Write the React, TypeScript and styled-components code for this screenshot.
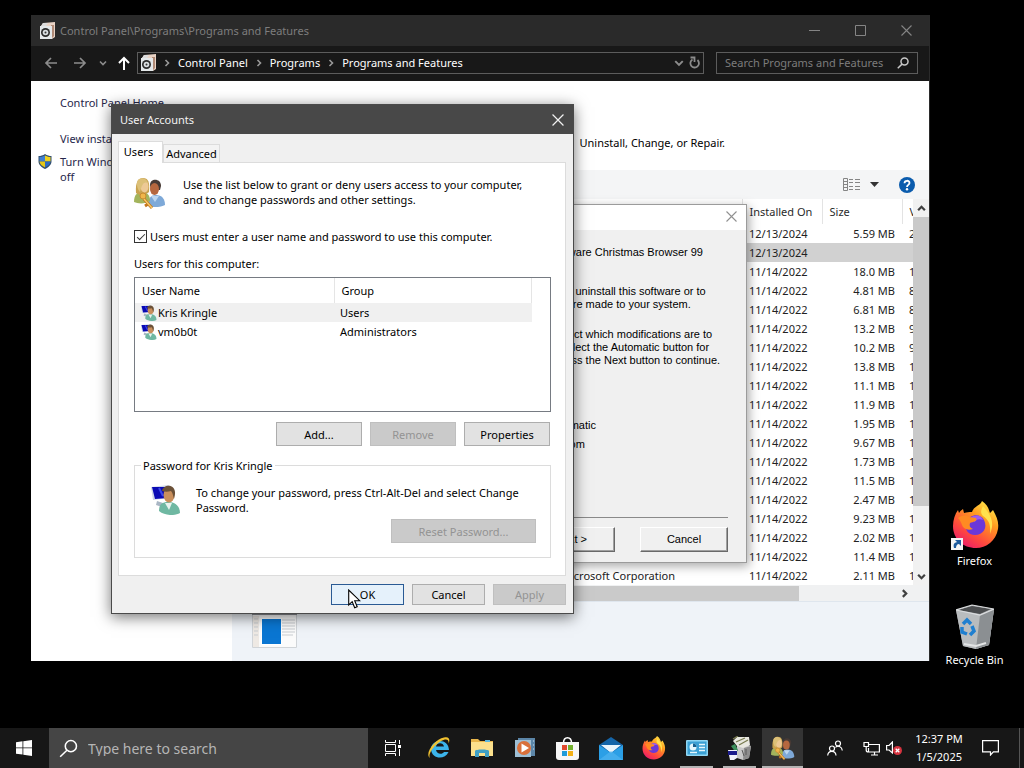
import React from "react";
import styled, { createGlobalStyle, css } from "styled-components";

const ui = `"Noto Sans", "Open Sans", "Liberation Sans", sans-serif`;

const Global = createGlobalStyle`
  *, *::before, *::after { box-sizing: border-box; }
  body { margin: 0; background: #000; font: 11px/15px ${ui}; color: #000; overflow: hidden; }
  button, input { font: inherit; color: inherit; }
  button { border: 0; padding: 0; background: none; }
  a { color: inherit; text-decoration: none; }
  svg { display: block; flex: none; }
`;

/* ---------- desktop ---------- */

const Desktop = styled.main`
  height: 100vh;
  display: flex;
  flex-direction: column;
  background: #000;
`;

const Workspace = styled.div`
  position: relative;
  flex: 1;
  min-height: 0;
`;

const Shortcuts = styled.nav`
  position: absolute;
  top: 500px;
  right: 12px;
  width: 75px;
  display: flex;
  flex-direction: column;
  gap: 36px;
`;

const Shortcut = styled.a`
  display: flex;
  flex-direction: column;
  align-items: center;
  gap: 2px;
  color: #fff;
  white-space: nowrap;
`;

/* ---------- explorer window ---------- */

const Explorer = styled.section`
  position: absolute;
  inset: 15px 94px 67px 31px;
  display: flex;
  flex-direction: column;
  background: #fff;
  border-right: 1px solid #2b2b2b;
`;

const ExplorerTitle = styled.header`
  display: flex;
  align-items: center;
  height: 31px;
  padding-left: 9px;
  background: #2a2a2a;
  color: #7d7d7d;
  flex: none;
`;

const TitleText = styled.h1`
  margin: 0 0 0 5px;
  flex: 1;
  font: inherit;
`;

const Caption = styled.button`
  width: 46px;
  height: 30px;
  display: grid;
  place-items: center;
  color: #858585;
`;

const NavBar = styled.div`
  display: flex;
  align-items: center;
  height: 35px;
  padding: 0 11px 2px;
  background: #181818;
  color: #fff;
  flex: none;
`;

const NavButton = styled.button<{ $w: number; $dim?: boolean }>`
  width: ${(p) => p.$w}px;
  height: 22px;
  display: grid;
  place-items: center;
  color: ${(p) => (p.$dim ? "#8c8c8c" : "#fff")};
`;

const UpButton = styled(NavButton)`
  padding-left: 4px;
`;

const Address = styled.div`
  flex: 1;
  display: flex;
  align-items: center;
  height: 22px;
  padding: 0 0 0 3px;
  border: 1px solid #5c5c5c;
`;

const Crumb = styled.a`
  white-space: nowrap;
`;

const CrumbArrow = styled.span`
  width: 22px;
  display: grid;
  place-items: center;
  color: #9a9a9a;
`;

const Spacer = styled.span`
  flex: 1;
`;

const SearchBox = styled.label`
  display: flex;
  align-items: center;
  width: 202px;
  height: 22px;
  margin-left: 12px;
  padding: 0 8px;
  border: 1px solid #5c5c5c;
  color: #c8c8c8;
`;

const SearchField = styled.input`
  flex: 1;
  min-width: 0;
  padding: 0;
  border: 0;
  outline: 0;
  background: none;
  &::placeholder { color: #7c7c7c; opacity: 1; }
`;

const ExplorerBody = styled.div`
  flex: 1;
  min-height: 0;
  display: flex;
`;

const Sidebar = styled.aside`
  width: 201px;
  flex: none;
  padding: 14px 8px 0 7px;
  color: #26264a;
`;

const SideLink = styled.a<{ $gap: number }>`
  display: flex;
  gap: 8px;
  margin-bottom: ${(p) => p.$gap}px;
`;

const SideIcon = styled.span`
  width: 14px;
  flex: none;
`;

const SideText = styled.span`
  max-width: 150px;
`;

const MainPane = styled.div`
  flex: 1;
  min-width: 0;
  display: flex;
  flex-direction: column;
`;

const Intro = styled.div`
  height: 89px;
  padding: 54px 204px 0 0;
  text-align: right;
  white-space: nowrap;
`;

const Toolbar = styled.div`
  height: 29px;
  flex: none;
  display: flex;
  align-items: center;
  justify-content: flex-end;
  gap: 10px;
  padding-right: 14px;
  background: #f4f5f6;
  color: #333;
`;

const ListArea = styled.div`
  flex: 1;
  min-height: 0;
  display: flex;
`;

const TableClip = styled.div`
  flex: 1;
  overflow: hidden;
  padding-left: 20px;
`;

const ProgramTable = styled.table`
  width: 100%;
  table-layout: fixed;
  border-collapse: collapse;
`;

const Col = styled.col<{ $w?: number }>`
  width: ${(p) => (p.$w ? p.$w + "px" : "auto")};
`;

const Th = styled.th`
  height: 25px;
  padding: 0 0 0 7px;
  border-right: 1px solid #e3e3e3;
  font-weight: 400;
  text-align: left;
  color: #2a2a2a;
  white-space: nowrap;
  overflow: hidden;
  &:last-child { border-right: 0; }
`;

const ProgramRow = styled.tr<{ $selected?: boolean }>`
  background: ${(p) => (p.$selected ? "#d1d1d1" : "transparent")};
`;

const Td = styled.td<{ $right?: boolean }>`
  height: 19px;
  padding: ${(p) => (p.$right ? "0 7px" : "0 0 0 7px")};
  color: #222;
  text-align: ${(p) => (p.$right ? "right" : "left")};
  white-space: nowrap;
  overflow: hidden;
`;

const VScroll = styled.div`
  width: 16px;
  display: flex;
  flex-direction: column;
  align-items: center;
  background: #f1f1f1;
  color: #404040;
`;

const VThumb = styled.div`
  width: 100%;
  flex: 289;
  background: #c9c9c9;
`;

const Track = styled.div<{ $grow: number }>`
  flex: ${(p) => p.$grow};
`;

const ScrollButton = styled.button`
  width: 16px;
  height: 18px;
  display: grid;
  place-items: center;
`;

const HScroll = styled.div`
  height: 17px;
  flex: none;
  display: flex;
  align-items: center;
  padding-right: 17px;
  background: #f0f1f2;
  border-bottom: 1px solid #dfe6ee;
  color: #404040;
`;

const HThumb = styled.div`
  height: 15px;
  flex: 568;
  background: #cacaca;
`;

const Details = styled.footer`
  height: 59px;
  flex: none;
  padding: 11px 0 0 20px;
  background: #eff3f8;
`;

/* ---------- uninstall wizard ---------- */

const Wizard = styled.section`
  position: absolute;
  top: 204px;
  left: 252px;
  width: 495px;
  border: 1px solid #9b9b9b;
  background: #f0f0f0;
  font: 11px/13px "Liberation Sans", Arial, sans-serif;
  box-shadow: 2px 3px 10px rgba(0, 0, 0, 0.35);
`;

const WizardTitle = styled.header`
  height: 25px;
  display: flex;
  justify-content: flex-end;
  align-items: center;
  padding: 0 9px 2px 0;
  background: #fff;
  color: #909090;
`;

const WizardBody = styled.div`
  display: flex;
  flex-direction: column;
  height: 287px;
  margin: 0 18px 0 162px;
  padding-top: 16px;
  white-space: nowrap;
`;

const WizardText = styled.p<{ $gap: number }>`
  margin: 0 0 ${(p) => p.$gap}px;
`;

const WizardChoice = styled.label`
  display: flex;
  align-items: center;
  gap: 6px;
  height: 19px;
  padding-left: 114px;
`;

const WizardRadio = styled.input`
  width: 12px;
  height: 12px;
  margin: 0;
`;

const WizardFooter = styled.footer`
  display: flex;
  justify-content: flex-end;
  gap: 25px;
  margin: 0 18px;
  padding: 9px 0 10px;
  border-top: 1px solid #8a8a8a;
`;

const WizardButton = styled.button`
  width: 88px;
  height: 25px;
  border: 1px solid;
  border-color: #fff #696969 #696969 #fff;
  box-shadow: inset -1px -1px #a0a0a0;
`;

/* ---------- user accounts dialog ---------- */

const Dialog = styled.section`
  position: absolute;
  top: 104px;
  left: 111px;
  width: 463px;
  border: 1px solid #4a4a4a;
  background: #f0f0f0;
  box-shadow: 0 3px 14px rgba(0, 0, 0, 0.55);
`;

const DialogTitle = styled.header`
  height: 29px;
  display: flex;
  align-items: center;
  justify-content: space-between;
  padding: 0 9px 0 8px;
  background: #484848;
  color: #f2f2f2;
`;

const TabList = styled.div`
  display: flex;
  align-items: flex-end;
  height: 28px;
  padding-left: 6px;
`;

const Tab = styled.button<{ $active?: boolean }>`
  border: 1px solid #dcdcdc;
  border-bottom: 0;
  ${(p) =>
    p.$active
      ? css`
          position: relative;
          height: 22px;
          width: 45px;
          margin-bottom: -1px;
          padding: 0 4px 2px 0;
          background: #fff;
        `
      : css`
          height: 18px;
          width: 57px;
          background: #f3f3f3;
        `}
`;

const TabPanel = styled.div`
  margin: 0 7px 0 6px;
  padding: 14px 14px 17px 15px;
  border: 1px solid #dcdcdc;
  background: #fff;
`;

const Lead = styled.div`
  display: flex;
  gap: 17px;
  height: 53px;
`;

const LeadText = styled.p`
  margin: 0;
  white-space: nowrap;
`;

const CheckLabel = styled.label`
  display: flex;
  align-items: center;
  gap: 3px;
  height: 13px;
  white-space: nowrap;
`;

const CheckBox = styled.input`
  appearance: none;
  width: 13px;
  height: 13px;
  margin: 0;
  border: 1px solid #333;
  background: #fff;
  display: grid;
  place-items: center;
  &:checked::after {
    content: "";
    width: 8px;
    height: 4px;
    border: solid #333;
    border-width: 0 0 1px 1px;
    transform: translateY(-1px) rotate(-45deg);
  }
`;

const ListLabel = styled.h2`
  margin: 13px 0 6px;
  font: inherit;
`;

const UserList = styled.div`
  height: 135px;
  border: 1px solid #767b82;
`;

const UserTable = styled.table`
  width: 397px;
  table-layout: fixed;
  border-collapse: collapse;
`;

const UserHead = styled.th`
  height: 25px;
  padding: 0 6px 0 7px;
  border-right: 1px solid #e5e5e5;
  font-weight: 400;
  text-align: left;
`;

const UserRow = styled.tr<{ $selected?: boolean }>`
  height: 19px;
  background: ${(p) => (p.$selected ? "#f0f0f0" : "#fff")};
`;

const UserCell = styled.td`
  padding: 0 6px;
`;

const UserName = styled.span`
  display: flex;
  align-items: center;
  gap: 1px;
`;

const ButtonRow = styled.div`
  display: flex;
  justify-content: flex-end;
  gap: 8px;
`;

const Push = styled.button<{ $w: number; $h?: number; $primary?: boolean }>`
  width: ${(p) => p.$w}px;
  height: ${(p) => p.$h ?? 24}px;
  border: 1px solid ${(p) => (p.$primary ? "#2a5a94" : "#adadad")};
  background: ${(p) => (p.$primary ? "#e5f1fb" : "#e2e2e2")};
  &:disabled {
    border-color: #bfbfbf;
    background: #cacaca;
    color: #939393;
  }
`;

const ListButtons = styled(ButtonRow)`
  padding: 10px 1px 0 0;
`;

const PasswordGroup = styled.fieldset`
  margin: 12px 0 0;
  padding: 12px 14px 14px 16px;
  border: 1px solid #dcdcdc;
`;

const Legend = styled.legend`
  margin-left: -10px;
  padding: 0 2px;
`;

const PasswordInfo = styled.div`
  display: flex;
  gap: 15px;
  height: 34px;
  white-space: nowrap;
`;

const DialogFooter = styled(ButtonRow)`
  padding: 8px 7px;
`;

const Pointer = styled.svg`
  position: absolute;
  top: 589px;
  left: 348px;
`;

/* ---------- taskbar ---------- */

const Taskbar = styled.footer`
  height: 40px;
  flex: none;
  display: flex;
  background: #171717;
  color: #fff;
`;

const TaskButton = styled.button<{ $w?: number; $open?: boolean; $active?: boolean }>`
  width: ${(p) => p.$w ?? 43}px;
  display: grid;
  place-items: center;
  background: ${(p) => (p.$active ? "#343434" : "none")};
  box-shadow: ${(p) => (p.$open || p.$active ? "inset 0 -2px #b4b4b4" : "none")};
  border: solid transparent;
  border-width: ${(p) => (p.$open ? "0 5px" : "0 1px")};
  background-clip: padding-box;
`;

const TaskSearch = styled.label`
  width: 319px;
  display: flex;
  align-items: center;
  gap: 10px;
  padding-left: 10px;
  margin-left: 1px;
  background: #454545;
`;

const TaskSearchField = styled(SearchField)`
  font-size: 14px;
  &::placeholder { color: #b5b5b5; }
`;

const TrayButton = styled.button<{ $w: number }>`
  width: ${(p) => p.$w}px;
  display: grid;
  place-items: center;
`;

const Clock = styled.button`
  width: 60px;
  line-height: 18px;
`;

const ShowDesktop = styled.button`
  width: 5px;
  margin-left: 8px;
  border-left: 1px solid #555;
`;

/* ---------- drawings ---------- */

const line = { fill: "none", stroke: "currentColor" } as const;

const ProgramsIcon = () => (
  <svg width="15" height="17" viewBox="0 0 15 17">
    <path d="M3 1 15 0v15l-3 2V5L1 4z" fill="#e9d3c5" />
    <path d="m3 1 5 0-2 3H1z" fill="#dcdcdc" />
    <path d="M11 3h3v11l-2 2z" fill="#b08a76" />
    <rect x="0" y="4" width="12" height="13" fill="#e4e8ea" />
    <circle cx="5.500" cy="10.500" r="4.500" fill="#2b2b2b" />
    <circle cx="5.500" cy="10.500" r="2.800" fill="#d8dde0" />
    <circle cx="5.500" cy="10.500" r="1" fill="#333" />
  </svg>
);

const Close = ({ size = 11 }: { size?: number }) => (
  <svg width={size} height={size} viewBox="0 0 11 11" {...line} strokeWidth="1.100"><path d="m.5.5 10 10m0-10-10 10" /></svg>
);

const Chevron = ({ dir, size = 8, weight = 1.6 }: { dir: "up" | "down" | "right"; size?: number; weight?: number }) => (
  <svg width={size} height={size} viewBox="0 0 8 8" {...line} strokeWidth={weight}>
    <path d={dir === "down" ? "m1 2.500 3 3 3-3" : dir === "up" ? "m1 5.500 3-3 3 3" : "m2.500 1 3 3-3 3"} />
  </svg>
);

const Arrow = ({ dir }: { dir: "left" | "right" | "up" }) => (
  <svg width="14" height="14" viewBox="0 0 14 14" {...line} strokeWidth={dir === "up" ? 2 : 1.7}>
    <path d={dir === "left" ? "M13 7H2m5-5L2 7l5 5" : dir === "right" ? "M1 7h11M7 2l5 5-5 5" : "M7 14V2M2 7l5-5 5 5"} />
  </svg>
);

const Magnifier = ({ size, weight = 1.6 }: { size: number; weight?: number }) => (
  <svg width={size} height={size} viewBox="0 0 16 16" {...line} strokeWidth={weight}>
    <circle cx="10" cy="6" r="4.700" /><path d="M6.700 9.500 1 15" />
  </svg>
);

const Shield = () => (
  <svg width="14" height="15" viewBox="0 0 14 15">
    <path d="M7 0C5 1.500 2.500 2 .5 2v5.500C.5 11 4 13.500 7 15c3-1.500 6.500-4 6.500-7.500V2C11.500 2 9 1.500 7 0" fill="#34506f" />
    <path d="M7 1.500v6H1.500V3C4 3 5.500 2.300 7 1.500" fill="#3f7fd0" /><path d="M7 1.500C8.500 2.300 10 3 12.500 3v4.500H7" fill="#f0d21c" />
    <path d="M1.500 7.500H7v6C4 12 1.700 10 1.500 7.500" fill="#e6c817" /><path d="M12.500 7.500H7v6c3-1.500 5.300-3.500 5.500-6" fill="#2c6bc4" />
  </svg>
);

const ViewIcon = () => (
  <svg width="17" height="14" viewBox="0 0 17 14" fill="none" stroke="#858585">
    <path d="M.5.5h4v12h-4zM.5 3.500h4m-4 3h4m-4 3h4" /><path d="M6 1.500h4M6 4.500h4M6 8.500h4M6 11.500h4M12 1.500h5M12 4.500h5M12 8.500h5M12 11.500h5" />
  </svg>
);

const HelpIcon = () => (
  <svg width="16" height="16" viewBox="0 0 16 16">
    <circle cx="8" cy="8" r="8" fill="#0b5cad" />
    <path d="M5.500 6.200C5.500 3 10.500 3 10.500 6 10.500 8 8 7.800 8 10" fill="none" stroke="#fff" strokeWidth="1.800" /><circle cx="8" cy="12.300" r="1.200" fill="#fff" />
  </svg>
);

const WindowThumb = () => (
  <svg width="45" height="35" viewBox="0 0 45 35">
    <path d="M.5.5h44v34H.5z" fill="#fbfbfb" stroke="#d0d4d8" /><path d="M0 0h45v2H0z" fill="#8a8d92" />
    <path d="M1 3h6v31H1z" fill="#eee9e4" /><path d="M2 6h4M2 10h4M2 14h4M2 18h4M2 22h4M30 7h13M30 10h13M30 13h13M30 16h13M30 19h13M30 22h11" stroke="#c9cdd1" />
    <path d="M9 5h21v27H9z" fill="#fff" /><path d="M10 6h19v25H10z" fill="#0a76d2" />
  </svg>
);

const UsersKeyIcon = ({ size }: { size: number }) => (
  <svg width={size} height={size} viewBox="0 0 32 32">
    <path d="M14 29c0-8 3-11 8-11 6 0 9 4 9 10-3 2-12 3-17 1" fill="#7ea9d8" /><path d="m17 19 4 6 4-6" fill="#bcd6f0" />
    <path d="M16 8c0-7 11-7 11 1l-1 4h-9z" fill="#473a35" /><ellipse cx="20.500" cy="12" rx="4.500" ry="6" fill="#b5673f" />
    <path d="M0 25c0-7 3-10 8-10s8 3 8 9c-4 3-12 3-16 1" fill="#a3b45c" />
    <path d="M2 16C1 4 5 1 9 1c5 0 7 4 6 14-3 3-10 4-13 1" fill="#c9a24f" /><ellipse cx="10.500" cy="9.500" rx="4" ry="6" fill="#edc995" />
    <path d="M4 3c3-3 9-2 10 3-4-2-6 1-8 9C3 12 2 6 4 3" fill="#dcc078" />
    <circle cx="9" cy="19" r="3" fill="#f0b64a" stroke="#c98a30" /><path d="m10 22 8 9M14 27l-3 2" stroke="#c4761c" strokeWidth="3" /><path d="m10 22 8 9" stroke="#f6c96a" strokeWidth="1.500" />
  </svg>
);

const UserIcon = ({ size }: { size: number }) => (
  <svg width={size} height={size} viewBox="0 0 30 30">
    <path d="m0 2 18-2v13L2 15z" fill="#cdd6e8" /><path d="M1 2h16v11L4 14z" fill="#0a0ab4" /><path d="m8 3 4 8" stroke="#3c48e8" strokeWidth="2" />
    <path d="m6 16 9 3-1 4-9-3z" fill="#a9b6c4" />
    <path d="M8 26c0-7 3-9 9-9 8 0 12 5 12 11-5 3-15 3-21-2" fill="#6fb8a2" /><path d="m14 18 4 7 3-7" fill="#e9f3ee" />
    <ellipse cx="18" cy="10" rx="5.500" ry="7.500" fill="#c98f5c" /><path d="M11 6c1-7 14-8 13 3l-1 5c-1-3-1-6-3-8-3 1-6 1-9 0" fill="#6b5138" />
  </svg>
);

const FirefoxIcon = ({ size }: { size: number }) => (
  <svg width={size} height={size} viewBox="0 0 46 48">
    <defs>
      <linearGradient id="fx" x1="0.850" y1="0" x2="0.200" y2="1"><stop offset="0" stopColor="#fff44f" /><stop offset=".35" stopColor="#ff9a1f" /><stop offset=".7" stopColor="#ff4a3d" /><stop offset="1" stopColor="#e8166f" /></linearGradient>
    </defs>
    <path d="M29 0c6 4 7 9 8 12l3-3c4 7 6 12 5 19-2 12-12 19-22 19C10 47 0 38 0 25 0 19 2 13 5 9l1 3c2-3 4-4 4-4l1 4c3-1 5-1 8-1 2-6 8-6 10-11" fill="url(#fx)" />
    <path d="M13 21c4-8 14-9 18-2 4 8-1 15-9 15-7 0-11-6-9-13" fill="#6b38d8" /><path d="M17 17c6-5 12-2 13 2-4-2-8 0-8 2z" fill="#9d5cf0" />
    <path d="M5 17c5-3 8-3 11-1l7 1c2 3-3 4-6 5-1 3 0 5 3 6-6 2-10-1-11-4-1-3-2-5-4-7" fill="#ff8a22" /><path d="M30 5c8 9 12 16 7 28 1-9-1-14-7-18-3-3-2-6 0-10" fill="#ffe14d" />
  </svg>
);

const FirefoxShortcut = () => (
  <svg width="50" height="51" viewBox="0 0 50 51">
    <g transform="translate(2 1)"><FirefoxIcon size={48} /></g>
    <path d="M1 38h12v12H1z" fill="#f4f4f4" /><path d="M4 48c-1-4 0-5 3-6l-2-2h6v6l-2-2c-2 0-3 2-3 4z" fill="#1d5a9c" />
  </svg>
);

const RecycleIcon = () => (
  <svg width="38" height="46" viewBox="0 0 38 46">
    <path d="m0 6 16-5 22 4-5 36-13 4-13-3z" fill="#a3a6a8" /><path d="m0 6 24 5 14-6-5 36-13 4-13-3z" fill="#b9bcbe" /><path d="m24 11 14-6-5 36-13 4z" fill="#8b8f92" />
    <path d="m2 6 14-4 19 3-11 5z" fill="#4b4d4f" /><path d="m0 6 16-5 22 4-14 6z" fill="none" stroke="#dadcde" strokeWidth="1.200" /><path d="m8 40 12 2 10-3" stroke="#e2e4e5" strokeWidth="2" fill="none" />
    <path d="m7 20 4-4 4 4M6 23v5l5 2M16 22l2 5-4 4" fill="none" stroke="#1f7fd0" strokeWidth="3.500" />
  </svg>
);

const WindowsLogo = () => (
  <svg width="16" height="16" viewBox="0 0 16 16" fill="#fff"><path d="m0 2.200 6.500-.9v6.200H0zM7.300 1.200 16 0v7.500H7.300zM0 8.300h6.500v6.300L0 13.700zM7.300 8.300H16V16l-8.700-1.200z" /></svg>
);

const TaskViewIcon = () => (
  <svg width="16" height="16" viewBox="0 0 16 16" fill="none" stroke="#fff"><path d="M.5 0v2.500h10V0M.5 4.500h10v7H.5zM.5 16v-2.500h10V16M14.500 0v4m0 5v7" /><path d="M13 5h3v3h-3z" fill="#fff" stroke="none" /></svg>
);

const IeIcon = () => (
  <svg width="24" height="24" viewBox="0 0 24 24">
    <path d="M22 14H9c.5 4 6 5 8 2h4.500C18 24 5 23.500 4 13.500 3.500 3 21.500 1 22 14M9 10.500h8c-.5-4.500-7.500-4.500-8 0" fill="#3cb4ea" />
    <path d="M3 22C-3 18 8 3 17 1.500c6-1.500 6 3 4.500 6 .5-3-1-5-5-3.500C9 6.500 0 18 3 22" fill="#f2c230" />
  </svg>
);

const FolderIcon = () => (
  <svg width="22" height="20" viewBox="0 0 22 20">
    <path d="M0 1h7l2 2h13v15H0z" fill="#e8b64c" /><path d="M0 4h22v14H0z" fill="#fbe08c" /><path d="M14 2h5v2h-5z" fill="#5db7de" />
    <path d="M4 19v-6c0-2 14-2 14 0v6h-4v-4H8v4z" fill="#3f9fc4" />
  </svg>
);

const MediaIcon = () => (
  <svg width="20" height="20" viewBox="0 0 20 20">
    <path d="M3 0h17v18H3z" fill="#5c86a8" /><path d="M0 2h16v17H0z" fill="#9ebfd4" /><path d="M18 3h1M18 7h1M18 11h1" stroke="#cfe0ea" />
    <circle cx="9" cy="10" r="7" fill="#d9703a" /><path d="M6.500 5.500 14 10l-7.500 4.500z" fill="#fff" />
  </svg>
);

const StoreIcon = () => (
  <svg width="23" height="24" viewBox="0 0 23 24">
    <path d="M7.500 7c0-7 8-7 8 0" fill="none" stroke="#fff" strokeWidth="1.500" /><path d="M0 6h23v15c0 2-1 3-3 3H3c-2 0-3-1-3-3z" fill="#f6f6f6" />
    <path d="M6 9h5v5H6z" fill="#e0492e" /><path d="M12 9h5v5h-5z" fill="#72b02c" /><path d="M6 15h5v5H6z" fill="#1f9bd8" /><path d="M12 15h5v5h-5z" fill="#f3b015" />
  </svg>
);

const MailIcon = () => (
  <svg width="24" height="23" viewBox="0 0 24 23">
    <path d="M0 8 12 0l12 8v15H0z" fill="#1565a8" /><path d="M2 8h20l-10 8z" fill="#eaf5fc" /><path d="m0 8 12 8L24 8v15H0z" fill="#2b9fe6" /><path d="m0 23 12-9 12 9z" fill="#53b8f2" opacity=".6" />
  </svg>
);

const ControlPanelIcon = () => (
  <svg width="22" height="16" viewBox="0 0 22 16">
    <rect width="22" height="16" rx="1" fill="#8fd6f2" /><path d="M1.500 1.500h19v13h-19z" fill="#3aa0d4" />
    <circle cx="7" cy="7" r="3.500" fill="#e6f7fd" /><path d="M7 7V3.500A3.500 3.500 0 0 1 10.500 7z" fill="#17618f" /><path d="M13 4.500h6M13 7.500h6M13 10.500h6M4 12.500h7" stroke="#e6f7fd" strokeWidth="1.400" />
  </svg>
);

const InstallerIcon = () => (
  <svg width="23" height="24" viewBox="0 0 23 24">
    <path d="m9 10 9-2 5 2-2 12-6 2-6-2z" fill="#c9c9c9" /><path d="m16 12 7-2-2 12-6 2z" fill="#8d8d8d" /><path d="m5 5 4-4 12 0 1 8-7 3-6-2z" fill="#e8e8e0" />
    <path d="m5 3 5-3M8 6l9-4M11 9l9-5" stroke="#7a7d52" strokeWidth="1.300" /><path d="m3 10 4-2 3 6-2 3z" fill="#3d8f5c" />
    <path d="M0 14h9v8l-3 2H2z" fill="#f1f1fb" /><path d="M0 15h9v4H0z" fill="#1b1b8c" /><path d="m14 14 2 6m2-7v6" stroke="#5b5b5b" />
  </svg>
);

const PeopleIcon = () => (
  <svg width="16" height="16" viewBox="0 0 16 16" fill="none" stroke="#fff" strokeWidth="1.200">
    <circle cx="11" cy="3.500" r="2.500" /><circle cx="5" cy="8.500" r="2.500" /><path d="M.7 15.500c.3-5.500 8-5.500 8.300 0M8.500 7.500c2-2.500 6.500-1 6.800 3" />
  </svg>
);

const NetworkIcon = () => (
  <svg width="17" height="15" viewBox="0 0 17 15" fill="none" stroke="#fff" strokeWidth="1.200"><path d="M6 3.500h10.400v7.500H5.500v-4M8 14h7m-3.500-3v3M1 1.500h4.500v4H1zM3.200 5.500V9c0 2 1 2 2 2" /></svg>
);

const VolumeIcon = () => (
  <svg width="16" height="14" viewBox="0 0 16 14"><path d="M.6 4.500h2.500L6.400 1v11L3.100 9H.6z" fill="none" stroke="#fff" strokeWidth="1.200" /><circle cx="11.500" cy="9.500" r="4.500" fill="#d6333f" /><path d="m9.700 7.700 3.600 3.600m0-3.600-3.600 3.600" stroke="#fff" strokeWidth="1.300" /></svg>
);

const ActionIcon = () => (
  <svg width="17" height="16" viewBox="0 0 17 16" fill="none" stroke="#fff" strokeWidth="1.200"><path d="M.6.6h15.800v11.200h-5L8.500 15v-3.200H.6z" /></svg>
);

/* ---------- data ---------- */

type Program = { date: string; size: string; version: string; publisher?: string };

const later = (size: string, version: string, publisher?: string): Program => ({ date: "11/14/2022", size, version, publisher });

const programs: Program[] = [
  { date: "12/13/2024", size: "5.59 MB", version: "2" },
  { date: "12/13/2024", size: "", version: "" },
  later("18.0 MB", "1"), later("4.81 MB", "8"), later("6.81 MB", "8"), later("13.2 MB", "9"), later("10.2 MB", "9"),
  later("13.8 MB", "1"), later("11.1 MB", "1"), later("11.9 MB", "1"), later("1.95 MB", "1"), later("9.67 MB", "1"),
  later("1.73 MB", "1"), later("11.5 MB", "1"), later("2.47 MB", "1"), later("9.23 MB", "1"), later("2.02 MB", "1"),
  later("11.4 MB", "1"), later("2.11 MB", "1", "Microsoft Corporation"),
];

const accounts = [
  { name: "Kris Kringle", group: "Users" },
  { name: "vm0b0t", group: "Administrators" },
];

/* ---------- windows ---------- */

const ExplorerWindow = () => (
  <Explorer>
    <ExplorerTitle>
      <ProgramsIcon />
      <TitleText>Control Panel\Programs\Programs and Features</TitleText>
      <Caption aria-label="Minimize"><svg width="11" height="1" viewBox="0 0 11 1"><path d="M0 0h11v1H0z" fill="currentColor" /></svg></Caption>
      <Caption aria-label="Maximize"><svg width="11" height="11" viewBox="0 0 11 11" {...line}><path d="M.5.5h10v10H.5z" /></svg></Caption>
      <Caption aria-label="Close"><Close /></Caption>
    </ExplorerTitle>
    <NavBar>
      <NavButton $w={18} $dim aria-label="Back"><Arrow dir="left" /></NavButton>
      <NavButton $w={39} $dim aria-label="Forward"><Arrow dir="right" /></NavButton>
      <NavButton $w={8} $dim aria-label="Recent"><Chevron dir="down" /></NavButton>
      <UpButton $w={30} aria-label="Up"><Arrow dir="up" /></UpButton>
      <Address>
        <ProgramsIcon />
        <CrumbArrow><Chevron dir="right" /></CrumbArrow>
        <Crumb href="#control-panel">Control Panel</Crumb>
        <CrumbArrow><Chevron dir="right" /></CrumbArrow>
        <Crumb href="#programs">Programs</Crumb>
        <CrumbArrow><Chevron dir="right" /></CrumbArrow>
        <Crumb href="#features">Programs and Features</Crumb>
        <Spacer />
        <NavButton $w={16} $dim aria-label="Previous locations"><Chevron dir="down" size={10} /></NavButton>
        <NavButton $w={16} $dim aria-label="Refresh">
          <svg width="12" height="13" viewBox="0 0 12 13" {...line} strokeWidth="1.800"><path d="M8.500 4a4.300 4.300 0 1 1-5-.5M1.500 1.500h4V6" /></svg>
        </NavButton>
      </Address>
      <SearchBox>
        <SearchField aria-label="Search Programs and Features" placeholder="Search Programs and Features" />
        <Magnifier size={12} weight={2} />
      </SearchBox>
    </NavBar>
    <ExplorerBody>
      <Sidebar>
        <SideLink href="#home" $gap={21}><SideIcon />Control Panel Home</SideLink>
        <SideLink href="#updates" $gap={8}><SideIcon />View installed updates</SideLink>
        <SideLink href="#windows-features" $gap={0}><SideIcon><Shield /></SideIcon><SideText>Turn Windows features on or off</SideText></SideLink>
      </Sidebar>
      <MainPane>
        <Intro>Uninstall, Change, or Repair.</Intro>
        <Toolbar>
          <ViewIcon />
          <svg width="9" height="5" viewBox="0 0 9 5"><path d="M0 0h9L4.500 5z" fill="#333" /></svg>
          <span />
          <HelpIcon />
        </Toolbar>
        <ListArea>
          <TableClip>
            <ProgramTable>
              <colgroup><Col /><Col $w={188} /><Col $w={80} /><Col $w={80} /><Col $w={11} /></colgroup>
              <thead><tr><Th /><Th /><Th>Installed On</Th><Th>Size</Th><Th>V</Th></tr></thead>
              <tbody>
                {programs.map((p, i) => (
                  <ProgramRow key={i} $selected={i === 1}>
                    <Td /><Td>{p.publisher}</Td><Td>{p.date}</Td><Td $right>{p.size}</Td><Td>{p.version}</Td>
                  </ProgramRow>
                ))}
              </tbody>
            </ProgramTable>
          </TableClip>
          <VScroll>
            <ScrollButton aria-label="Scroll up"><Chevron dir="up" size={9} weight={2} /></ScrollButton>
            <VThumb />
            <Track $grow={61} />
            <ScrollButton aria-label="Scroll down"><Chevron dir="down" size={9} weight={2} /></ScrollButton>
          </VScroll>
        </ListArea>
        <HScroll>
          <HThumb />
          <Track $grow={97} />
          <ScrollButton aria-label="Scroll right"><Chevron dir="right" size={9} weight={2} /></ScrollButton>
        </HScroll>
        <Details><WindowThumb /></Details>
      </MainPane>
    </ExplorerBody>
  </Explorer>
);

const WizardWindow = () => (
  <Wizard>
    <WizardTitle><button aria-label="Close wizard"><Close /></button></WizardTitle>
    <WizardBody>
      <WizardText $gap={26}>Uninstall the selected Free Software Christmas Browser 99</WizardText>
      <WizardText $gap={17}>You can choose to automatically uninstall this software or to<br />choose exactly which changes are made to your system.</WizardText>
      <WizardText $gap={49}>
        Select the Custom button to select which modifications are to<br />
        be made during the uninstall. Select the Automatic button for<br />
        the default uninstall options. Press the Next button to continue.
      </WizardText>
      <WizardChoice><WizardRadio type="radio" name="method" defaultChecked />Automatic</WizardChoice>
      <WizardChoice><WizardRadio type="radio" name="method" />Custom</WizardChoice>
    </WizardBody>
    <WizardFooter>
      <WizardButton>Next &gt;</WizardButton>
      <WizardButton>Cancel</WizardButton>
    </WizardFooter>
  </Wizard>
);

const AccountsDialog = () => (
  <Dialog role="dialog" aria-label="User Accounts">
    <DialogTitle><span>User Accounts</span><button aria-label="Close dialog"><Close size={12} /></button></DialogTitle>
    <TabList role="tablist">
      <Tab role="tab" aria-selected $active>Users</Tab>
      <Tab role="tab" aria-selected={false}>Advanced</Tab>
    </TabList>
    <TabPanel role="tabpanel">
      <Lead>
        <UsersKeyIcon size={32} />
        <LeadText>Use the list below to grant or deny users access to your computer,<br />and to change passwords and other settings.</LeadText>
      </Lead>
      <CheckLabel><CheckBox type="checkbox" defaultChecked />Users must enter a user name and password to use this computer.</CheckLabel>
      <ListLabel>Users for this computer:</ListLabel>
      <UserList>
        <UserTable>
          <colgroup><Col $w={199} /><Col /></colgroup>
          <thead><tr><UserHead>User Name</UserHead><UserHead>Group</UserHead></tr></thead>
          <tbody>
            {accounts.map((a, i) => (
              <UserRow key={a.name} $selected={i === 0}>
                <UserCell><UserName><UserIcon size={16} />{a.name}</UserName></UserCell>
                <UserCell>{a.group}</UserCell>
              </UserRow>
            ))}
          </tbody>
        </UserTable>
      </UserList>
      <ListButtons>
        <Push $w={86}>Add...</Push>
        <Push $w={86} disabled>Remove</Push>
        <Push $w={86}>Properties</Push>
      </ListButtons>
      <PasswordGroup>
        <Legend>Password for Kris Kringle</Legend>
        <PasswordInfo>
          <UserIcon size={30} />
          <span>To change your password, press Ctrl-Alt-Del and select Change<br />Password.</span>
        </PasswordInfo>
        <ButtonRow><Push $w={145} disabled>Reset Password...</Push></ButtonRow>
      </PasswordGroup>
    </TabPanel>
    <DialogFooter>
      <Push $w={73} $h={21} $primary>OK</Push>
      <Push $w={73} $h={21}>Cancel</Push>
      <Push $w={73} $h={21} disabled>Apply</Push>
    </DialogFooter>
  </Dialog>
);

export default function App() {
  return (
    <Desktop>
      <Global />
      <Workspace>
        <ExplorerWindow />
        <WizardWindow />
        <AccountsDialog />
        <Shortcuts>
          <Shortcut href="#firefox"><FirefoxShortcut />Firefox</Shortcut>
          <Shortcut href="#recycle-bin"><RecycleIcon />Recycle Bin</Shortcut>
        </Shortcuts>
        <Pointer width="13" height="20" viewBox="0 0 13 20"><path d="M.7 1v15l3.500-3.300 2.500 6 2.500-1-2.500-6h5z" fill="#fff" stroke="#000" strokeWidth="1.100" /></Pointer>
      </Workspace>
      <Taskbar>
        <TaskButton $w={48} aria-label="Start"><WindowsLogo /></TaskButton>
        <TaskSearch>
          <Magnifier size={19} weight={1.3} />
          <TaskSearchField aria-label="Type here to search" placeholder="Type here to search" />
        </TaskSearch>
        <TaskButton $w={49} aria-label="Task View"><TaskViewIcon /></TaskButton>
        <TaskButton aria-label="Internet Explorer"><IeIcon /></TaskButton>
        <TaskButton aria-label="File Explorer"><FolderIcon /></TaskButton>
        <TaskButton aria-label="Media Player"><MediaIcon /></TaskButton>
        <TaskButton aria-label="Store"><StoreIcon /></TaskButton>
        <TaskButton aria-label="Mail"><MailIcon /></TaskButton>
        <TaskButton aria-label="Firefox"><FirefoxIcon size={24} /></TaskButton>
        <TaskButton $open aria-label="Control Panel"><ControlPanelIcon /></TaskButton>
        <TaskButton $open aria-label="Uninstall"><InstallerIcon /></TaskButton>
        <TaskButton $active aria-label="User Accounts"><UsersKeyIcon size={24} /></TaskButton>
        <Spacer />
        <TrayButton $w={56} aria-label="People"><PeopleIcon /></TrayButton>
        <TrayButton $w={16} aria-label="Network"><NetworkIcon /></TrayButton>
        <TrayButton $w={30} aria-label="Volume"><VolumeIcon /></TrayButton>
        <Clock>12:37 PM<br />1/5/2025</Clock>
        <TrayButton $w={42} aria-label="Notifications"><ActionIcon /></TrayButton>
        <ShowDesktop aria-label="Show desktop" />
      </Taskbar>
    </Desktop>
  );
}
